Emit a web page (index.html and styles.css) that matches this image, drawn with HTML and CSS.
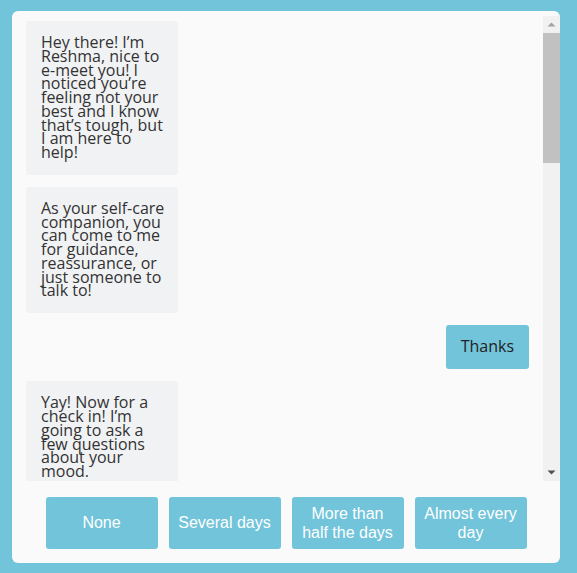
FILE: index.html
```html
<!DOCTYPE html>
<html lang="en">
<head>
<meta charset="utf-8">
<title>Chat</title>
<link rel="stylesheet" href="styles.css">
</head>
<body>
<div class="card">
  <div class="chat">
    <div class="messages">
      <div class="bubble bot">Hey there! I’m Reshma, nice to e-meet you! I noticed you’re feeling not your best and I know that’s tough, but I am here to help!</div>
      <div class="bubble bot">As your <span class="nowrap">self-care</span> companion, you can come to me for guidance, reassurance, or just someone to talk to!</div>
      <div class="bubble user">Thanks</div>
      <div class="bubble bot">Yay! Now for a check in! I’m going to ask a few questions about your mood.</div>
    </div>
    <div class="scrollbar">
      <div class="sb-btn"><svg width="17" height="17" viewBox="0 0 17 17"><path d="M4.5 10.5 L8.5 6.5 L12.5 10.5 Z" fill="#a3a3a3"/></svg></div>
      <div class="sb-track"><div class="sb-thumb"></div></div>
      <div class="sb-btn"><svg width="17" height="17" viewBox="0 0 17 17"><path d="M4.5 6.5 L8.5 10.5 L12.5 6.5 Z" fill="#505050"/></svg></div>
    </div>
  </div>
  <div class="choices">
    <button class="choice">None</button>
    <button class="choice">Several days</button>
    <button class="choice">More than half the days</button>
    <button class="choice">Almost every day</button>
  </div>
</div>
</body>
</html>
```
FILE: styles.css
```css
html, body {
  margin: 0;
  padding: 0;
}
body {
  background: #72c4da;
  padding: 11px 17px 10px 12px;
  box-sizing: border-box;
  width: 577px;
  height: 573px;
}
.card {
  background: #fafafa;
  border-radius: 6px;
  height: 552px;
  display: flex;
  flex-direction: column;
  overflow: hidden;
}
.chat {
  margin-top: 5px;
  height: 465px;
  display: flex;
}
.messages {
  flex: 1;
  overflow: hidden;
  padding: 5px 14px 0 14px;
  display: flex;
  flex-direction: column;
  align-items: flex-start;
  gap: 12px;
}
.bubble {
  font-family: "Open Sans", sans-serif;
  font-size: 16px;
  line-height: 13.75px;
  color: #333;
  background: #f1f2f4;
  border-radius: 3px;
  padding: 15px 11px 15px 15px;
  width: 126px;
  flex-shrink: 0;
}
.nowrap {
  white-space: nowrap;
}
.bubble.user {
  width: auto;
  padding: 15px 15px 15.5px;
  align-self: flex-end;
  background: #72c4da;
  color: #222;
}
.scrollbar {
  width: 17px;
  display: flex;
  flex-direction: column;
  background: #f1f1f1;
}
.sb-btn {
  height: 17px;
  flex-shrink: 0;
}
.sb-btn svg {
  display: block;
}
.sb-track {
  flex: 1;
}
.sb-thumb {
  height: 130px;
  background: #c1c1c1;
}
.choices {
  display: flex;
  justify-content: center;
  gap: 11px;
  margin-top: 16px;
}
.choice {
  width: 112px;
  height: 52px;
  border: none;
  border-radius: 3px;
  background: #72c4da;
  color: #ffffff;
  font-family: "Liberation Sans", Arial, sans-serif;
  font-size: 16px;
  line-height: 18.5px;
  padding: 1px 7px 0;
}
```
